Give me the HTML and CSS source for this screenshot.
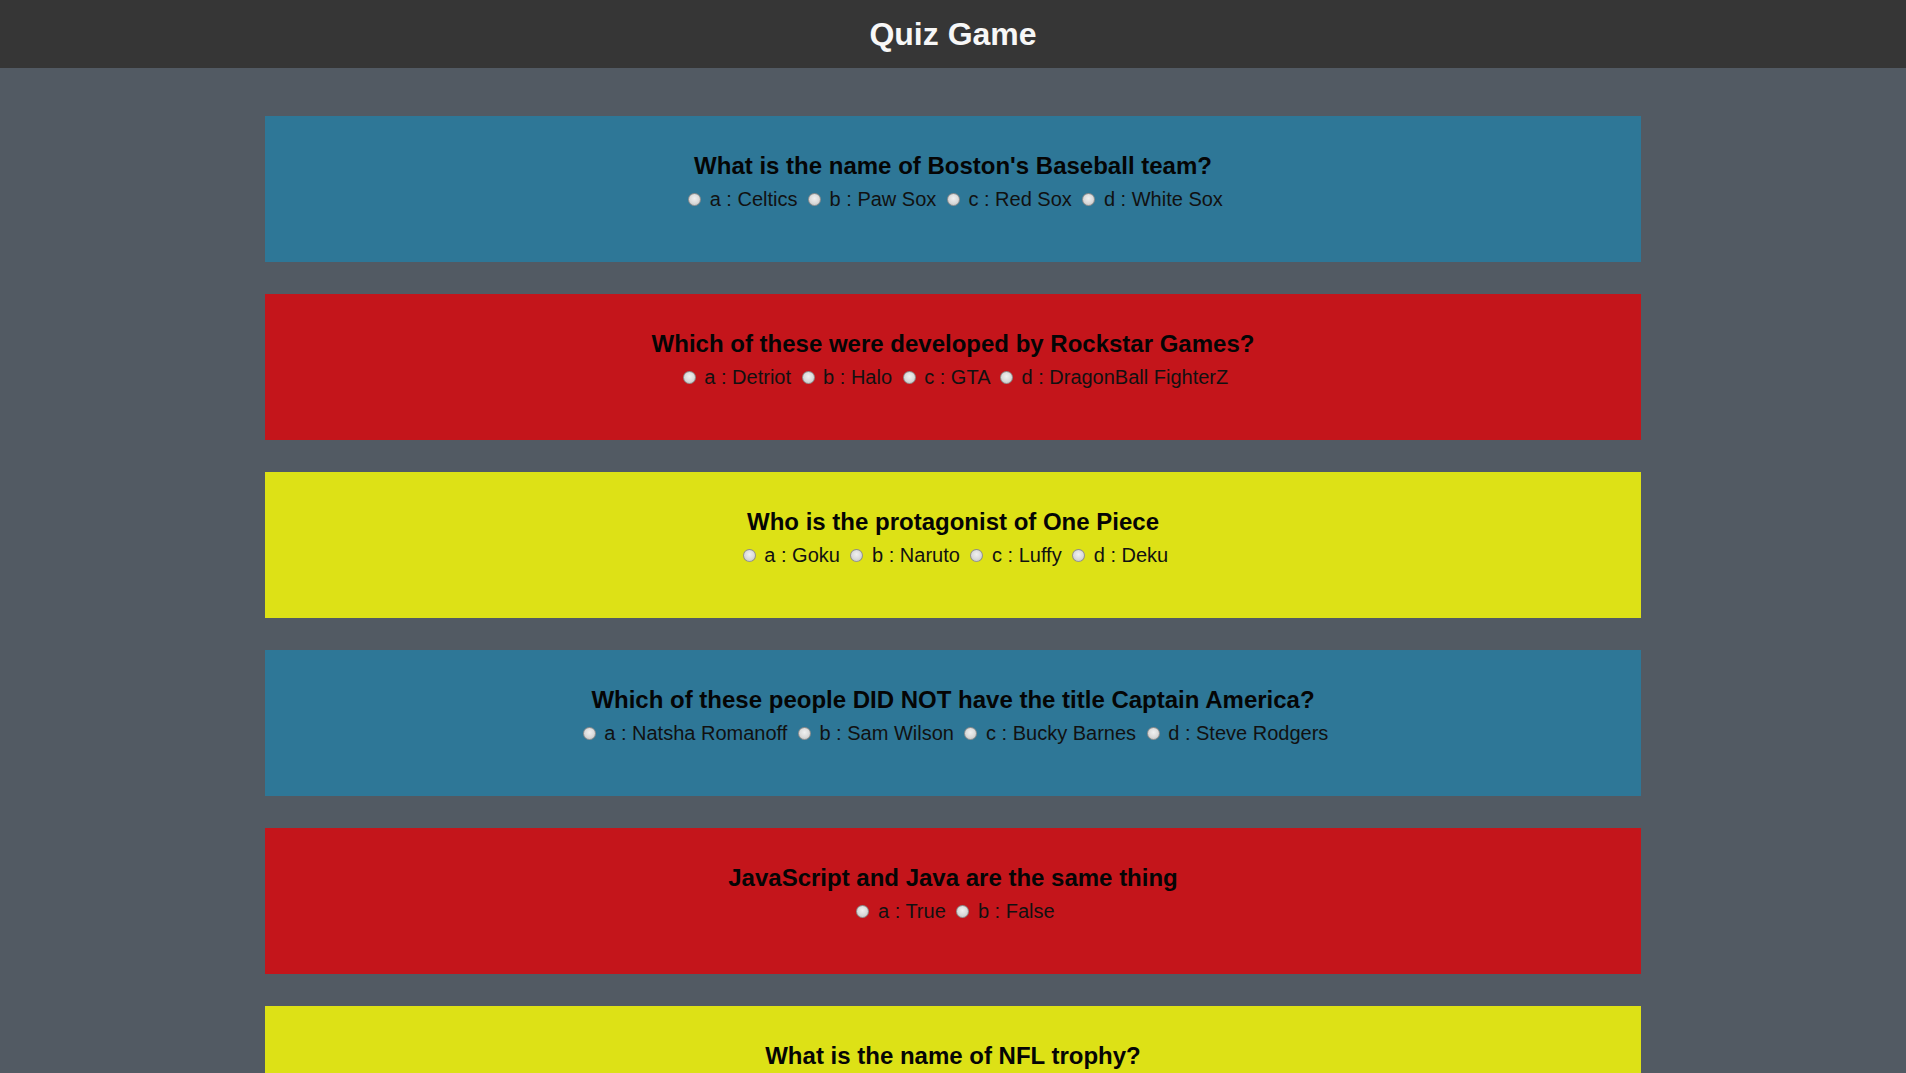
FILE: index.html
```html
<!DOCTYPE html>
<html lang="en">
<head>
<meta charset="utf-8">
<title>Quiz Game</title>
<link rel="stylesheet" href="styles.css">
</head>
<body>
<header class="topbar">
  <h1 class="title">Quiz Game</h1>
</header>
<main class="quiz">
  <section class="card card-blue">
    <h2 class="question">What is the name of Boston's Baseball team?</h2>
    <div class="options">
      <input class="radio" type="radio" name="q1" value="a"> a : Celtics
      <input class="radio" type="radio" name="q1" value="b"> b : Paw Sox
      <input class="radio" type="radio" name="q1" value="c"> c : Red Sox
      <input class="radio" type="radio" name="q1" value="d"> d : White Sox
    </div>
  </section>
  <section class="card card-red">
    <h2 class="question">Which of these were developed by Rockstar Games?</h2>
    <div class="options">
      <input class="radio" type="radio" name="q2" value="a"> a : Detriot
      <input class="radio" type="radio" name="q2" value="b"> b : Halo
      <input class="radio" type="radio" name="q2" value="c"> c : GTA
      <input class="radio" type="radio" name="q2" value="d"> d : DragonBall FighterZ
    </div>
  </section>
  <section class="card card-yellow">
    <h2 class="question">Who is the protagonist of One Piece</h2>
    <div class="options">
      <input class="radio" type="radio" name="q3" value="a"> a : Goku
      <input class="radio" type="radio" name="q3" value="b"> b : Naruto
      <input class="radio" type="radio" name="q3" value="c"> c : Luffy
      <input class="radio" type="radio" name="q3" value="d"> d : Deku
    </div>
  </section>
  <section class="card card-blue">
    <h2 class="question">Which of these people DID NOT have the title Captain America?</h2>
    <div class="options">
      <input class="radio" type="radio" name="q4" value="a"> a : Natsha Romanoff
      <input class="radio" type="radio" name="q4" value="b"> b : Sam Wilson
      <input class="radio" type="radio" name="q4" value="c"> c : Bucky Barnes
      <input class="radio" type="radio" name="q4" value="d"> d : Steve Rodgers
    </div>
  </section>
  <section class="card card-red">
    <h2 class="question">JavaScript and Java are the same thing</h2>
    <div class="options">
      <input class="radio" type="radio" name="q5" value="a"> a : True
      <input class="radio" type="radio" name="q5" value="b"> b : False
    </div>
  </section>
  <section class="card card-yellow">
    <h2 class="question">What is the name of NFL trophy?</h2>
    <div class="options">
      <input class="radio" type="radio" name="q6" value="a"> a : Stanley Cup
      <input class="radio" type="radio" name="q6" value="b"> b : Vince Lombardi Trophy
      <input class="radio" type="radio" name="q6" value="c"> c : Larry O'Brien Trophy
      <input class="radio" type="radio" name="q6" value="d"> d : Commissioner's Trophy
    </div>
  </section>
</main>
</body>
</html>
```

FILE: styles.css
```css
html, body {
  margin: 0;
  padding: 0;
}

body {
  background: #525a63;
  font-family: "Liberation Sans", Arial, sans-serif;
  color: #000;
}

.topbar {
  height: 68px;
  background: #363636;
  display: flex;
  align-items: center;
  justify-content: center;
}

.title {
  margin: 0;
  font-size: 32px;
  font-weight: bold;
  line-height: 36px;
  color: #f7f7f7;
}

.quiz {
  display: flex;
  flex-direction: column;
  align-items: center;
  gap: 32px;
  padding: 48px 0 40px;
}

.card {
  width: 1376px;
  box-sizing: border-box;
  padding: 36px 20px 51px;
  text-align: center;
}

.card-blue {
  background: #2e7797;
}

.card-red {
  background: #c4151b;
}

.card-yellow {
  background: #dde116;
}

.question {
  margin: 0;
  font-size: 24px;
  font-weight: bold;
  line-height: 28px;
  color: #050505;
}

.options {
  margin-top: 7px;
  font-size: 20px;
  line-height: 24px;
  color: #111;
}

.radio {
  -webkit-appearance: none;
  appearance: none;
  box-sizing: border-box;
  width: 13px;
  height: 13px;
  margin: 3px 3px 0 5px;
  border-radius: 50%;
  border: 1px solid rgba(0, 0, 0, 0.32);
  background: radial-gradient(circle at 50% 40%, #f0f0f0 0%, #dadada 55%, #bdbdbd 100%);
  vertical-align: baseline;
}
```
